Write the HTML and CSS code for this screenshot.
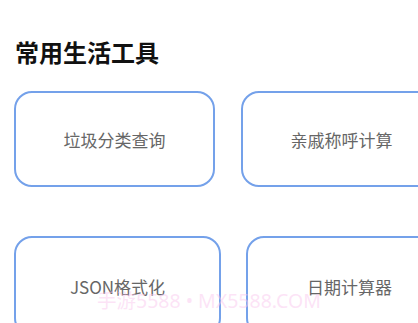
FILE: index.html
```html
<!DOCTYPE html>
<html lang="zh-CN">
<head>
<meta charset="utf-8">
<title>常用生活工具</title>
<link rel="stylesheet" href="styles.css">
</head>
<body>
<div class="page">
  <h1 class="title">常用生活工具</h1>
  <div class="row row-a">
    <div class="card">垃圾分类查询</div>
    <div class="card">亲戚称呼计算</div>
  </div>
  <div class="row row-b">
    <div class="card">JSON格式化</div>
    <div class="card">日期计算器</div>
  </div>
  <div class="watermark">手游5588 • MX5588.COM</div>
</div>
</body>
</html>
```
FILE: styles.css
```css
html, body {
  margin: 0;
  padding: 0;
  background: #ffffff;
}
body {
  width: 418px;
  height: 323px;
  overflow: hidden;
  font-family: "Noto Sans CJK SC", "Noto Sans", sans-serif;
}
.page {
  position: relative;
  padding: 40px 0 0 14px;
  height: 323px;
  box-sizing: border-box;
  overflow: hidden;
}
.title {
  margin: 0;
  padding-left: 1px;
  font-size: 24px;
  line-height: 24px;
  font-weight: 700;
  color: #111111;
}
.row {
  display: flex;
  flex-wrap: nowrap;
}
.row-a {
  margin-top: 27px;
  gap: 26px;
}
.row-b {
  margin-top: 49px;
  gap: 25px;
}
.card {
  flex: none;
  box-sizing: border-box;
  border: 2px solid #74a1ea;
  border-radius: 18px;
  display: flex;
  align-items: center;
  justify-content: center;
  color: #666666;
  font-size: 17px;
  font-weight: 400;
}
.row-a .card {
  width: 201px;
  height: 96px;
}
.row-b .card {
  width: 207px;
  height: 100px;
}
.watermark {
  position: absolute;
  left: 97px;
  top: 289px;
  font-family: "Noto Sans", "Noto Sans CJK SC", sans-serif;
  font-size: 19.5px;
  line-height: 24px;
  color: rgba(250, 200, 238, 0.5);
  white-space: nowrap;
}
```
